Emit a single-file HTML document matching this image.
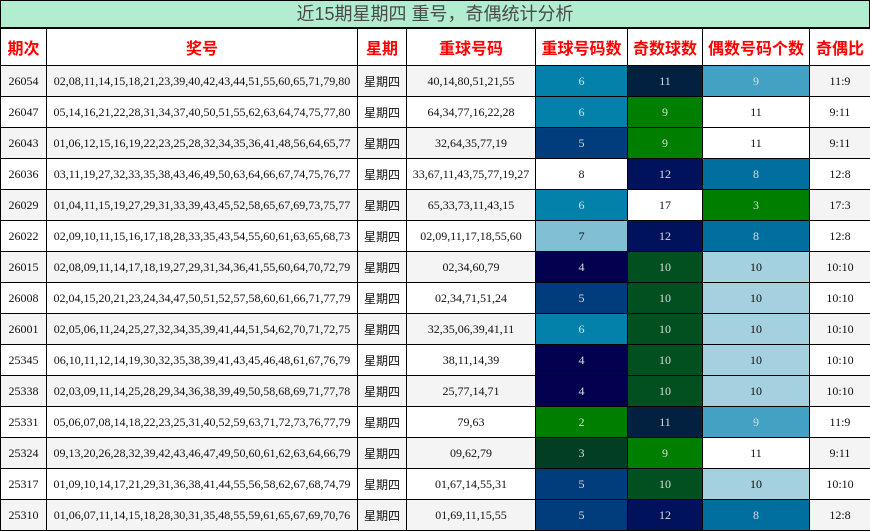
<!DOCTYPE html>
<html><head><meta charset="utf-8"><style>
*{margin:0;padding:0;box-sizing:border-box}
body{width:870px;height:531px;overflow:hidden;background:#fff;position:relative}
.t{position:absolute;left:0;top:0;width:870px;height:29px;background:#b3edd0;border:1px solid #000;border-bottom:2px solid #000;text-align:center;font:18px/26px "Liberation Sans","Noto Sans CJK SC",sans-serif;color:#4a4a4a}
table{position:absolute;left:0;top:28px;border-collapse:collapse;table-layout:fixed;width:870px}
td{border:1px solid #000;text-align:center;font:12px "Liberation Serif","Noto Sans CJK SC",serif;color:#111;height:31px;padding:0;white-space:nowrap;overflow:hidden}
tr.h td{height:37px;background:#fdf5e6;color:#f00;font:bold 16px "Liberation Sans","Noto Sans CJK SC",sans-serif}
tr:nth-child(even) td{background:#f4f4f4}
tr:nth-child(odd) td{background:#fff}
td.w{color:#ddd}
</style></head><body>
<div class="t">近15期星期四 重号，奇偶统计分析</div>
<table>
<colgroup><col style="width:46px"><col style="width:311px"><col style="width:49px"><col style="width:129px"><col style="width:92px"><col style="width:75px"><col style="width:107px"><col style="width:61px"></colgroup>
<tr class="h"><td>期次</td><td>奖号</td><td>星期</td><td>重球号码</td><td>重球号码数</td><td>奇数球数</td><td>偶数号码个数</td><td>奇偶比</td></tr>
<tr><td>26054</td><td>02,08,11,14,15,18,21,23,39,40,42,43,44,51,55,60,65,71,79,80</td><td>星期四</td><td>40,14,80,51,21,55</td><td class="w" style="background:#0481aa">6</td><td class="w" style="background:#02203f">11</td><td class="w" style="background:#43a2c4">9</td><td>11:9</td></tr>
<tr><td>26047</td><td>05,14,16,21,22,28,31,34,37,40,50,51,55,62,63,64,74,75,77,80</td><td>星期四</td><td>64,34,77,16,22,28</td><td class="w" style="background:#0481aa">6</td><td class="w" style="background:#007e00">9</td><td style="background:#fff">11</td><td>9:11</td></tr>
<tr><td>26043</td><td>01,06,12,15,16,19,22,23,25,28,32,34,35,36,41,48,56,64,65,77</td><td>星期四</td><td>32,64,35,77,19</td><td class="w" style="background:#013c7c">5</td><td class="w" style="background:#007e00">9</td><td style="background:#fff">11</td><td>9:11</td></tr>
<tr><td>26036</td><td>03,11,19,27,32,33,35,38,43,46,49,50,63,64,66,67,74,75,76,77</td><td>星期四</td><td>33,67,11,43,75,77,19,27</td><td style="background:#fff">8</td><td class="w" style="background:#01125c">12</td><td class="w" style="background:#006fa0">8</td><td>12:8</td></tr>
<tr><td>26029</td><td>01,04,11,15,19,27,29,31,33,39,43,45,52,58,65,67,69,73,75,77</td><td>星期四</td><td>65,33,73,11,43,15</td><td class="w" style="background:#0481aa">6</td><td style="background:#fff">17</td><td class="w" style="background:#007e00">3</td><td>17:3</td></tr>
<tr><td>26022</td><td>02,09,10,11,15,16,17,18,28,33,35,43,54,55,60,61,63,65,68,73</td><td>星期四</td><td>02,09,11,17,18,55,60</td><td style="background:#80bfd4">7</td><td class="w" style="background:#01125c">12</td><td class="w" style="background:#006fa0">8</td><td>12:8</td></tr>
<tr><td>26015</td><td>02,08,09,11,14,17,18,19,27,29,31,34,36,41,55,60,64,70,72,79</td><td>星期四</td><td>02,34,60,79</td><td class="w" style="background:#02004f">4</td><td class="w" style="background:#025020">10</td><td style="background:#a4d0e0">10</td><td>10:10</td></tr>
<tr><td>26008</td><td>02,04,15,20,21,23,24,34,47,50,51,52,57,58,60,61,66,71,77,79</td><td>星期四</td><td>02,34,71,51,24</td><td class="w" style="background:#013c7c">5</td><td class="w" style="background:#025020">10</td><td style="background:#a4d0e0">10</td><td>10:10</td></tr>
<tr><td>26001</td><td>02,05,06,11,24,25,27,32,34,35,39,41,44,51,54,62,70,71,72,75</td><td>星期四</td><td>32,35,06,39,41,11</td><td class="w" style="background:#0481aa">6</td><td class="w" style="background:#025020">10</td><td style="background:#a4d0e0">10</td><td>10:10</td></tr>
<tr><td>25345</td><td>06,10,11,12,14,19,30,32,35,38,39,41,43,45,46,48,61,67,76,79</td><td>星期四</td><td>38,11,14,39</td><td class="w" style="background:#02004f">4</td><td class="w" style="background:#025020">10</td><td style="background:#a4d0e0">10</td><td>10:10</td></tr>
<tr><td>25338</td><td>02,03,09,11,14,25,28,29,34,36,38,39,49,50,58,68,69,71,77,78</td><td>星期四</td><td>25,77,14,71</td><td class="w" style="background:#02004f">4</td><td class="w" style="background:#025020">10</td><td style="background:#a4d0e0">10</td><td>10:10</td></tr>
<tr><td>25331</td><td>05,06,07,08,14,18,22,23,25,31,40,52,59,63,71,72,73,76,77,79</td><td>星期四</td><td>79,63</td><td class="w" style="background:#007e00">2</td><td class="w" style="background:#02203f">11</td><td class="w" style="background:#43a2c4">9</td><td>11:9</td></tr>
<tr><td>25324</td><td>09,13,20,26,28,32,39,42,43,46,47,49,50,60,61,62,63,64,66,79</td><td>星期四</td><td>09,62,79</td><td class="w" style="background:#023e24">3</td><td class="w" style="background:#007e00">9</td><td style="background:#fff">11</td><td>9:11</td></tr>
<tr><td>25317</td><td>01,09,10,14,17,21,29,31,36,38,41,44,55,56,58,62,67,68,74,79</td><td>星期四</td><td>01,67,14,55,31</td><td class="w" style="background:#013c7c">5</td><td class="w" style="background:#025020">10</td><td style="background:#a4d0e0">10</td><td>10:10</td></tr>
<tr><td>25310</td><td>01,06,07,11,14,15,18,28,30,31,35,48,55,59,61,65,67,69,70,76</td><td>星期四</td><td>01,69,11,15,55</td><td class="w" style="background:#013c7c">5</td><td class="w" style="background:#01125c">12</td><td class="w" style="background:#006fa0">8</td><td>12:8</td></tr>
</table>
</body></html>
